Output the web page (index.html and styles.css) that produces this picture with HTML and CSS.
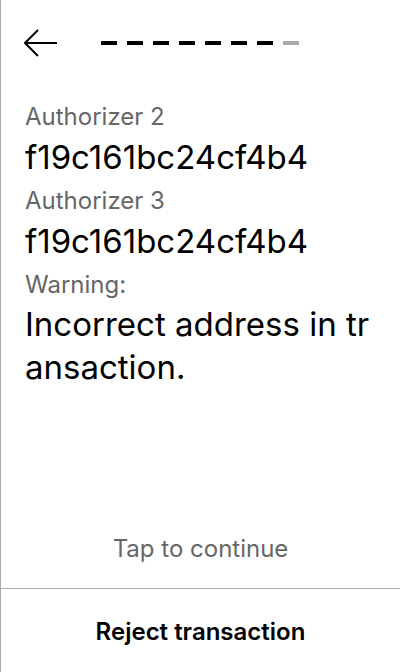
FILE: index.html
```html
<!DOCTYPE html>
<html>
<head>
<meta charset="utf-8">
<link rel="stylesheet" href="styles.css">
</head>
<body>
<div class="screen">
  <div class="header">
    <svg class="back" width="34" height="28" viewBox="0 0 34 28">
      <path d="M14 1 L1 14 L14 27 M1 14 H33" fill="none" stroke="#000" stroke-width="2"/>
    </svg>
    <div class="progress">
      <span class="dash"></span><span class="dash"></span><span class="dash"></span><span class="dash"></span><span class="dash"></span><span class="dash"></span><span class="dash"></span><span class="dash dim"></span>
    </div>
  </div>
  <div class="content">
    <div class="label">Authorizer 2</div>
    <div class="value">f19c161bc24cf4b4</div>
    <div class="label">Authorizer 3</div>
    <div class="value">f19c161bc24cf4b4</div>
    <div class="label">Warning:</div>
    <div class="warn">Incorrect address in transaction.</div>
  </div>
  <div class="tap">Tap to continue</div>
  <div class="reject">Reject transaction</div>
</div>
</body>
</html>
```

FILE: styles.css
```css
html, body {
  margin: 0;
  padding: 0;
  background: #fff;
}
.screen {
  width: 400px;
  height: 672px;
  box-sizing: border-box;
  border-left: 1px solid #aaaaaa;
  display: flex;
  flex-direction: column;
  font-family: Inter, "Noto Sans", sans-serif;
  color: #000;
}
.header {
  display: flex;
  align-items: center;
  height: 28px;
  padding: 29px 0 0 23px;
}
.back {
  display: block;
}
.progress {
  display: flex;
  gap: 10px;
  margin-left: 43px;
}
.dash {
  width: 16px;
  height: 4px;
  background: #000;
}
.dash.dim {
  background: #aaaaaa;
}
.content {
  padding: 46px 24px 0 24px;
  flex: 1;
  display: flex;
  flex-direction: column;
}
.label {
  font-size: 24px;
  line-height: 28px;
  color: #666;
  margin-bottom: 6px;
}
.value {
  font-size: 33px;
  line-height: 40px;
  margin-bottom: 10px;
}
.warn {
  margin-top: -2px;
  font-size: 33px;
  line-height: 43px;
  word-break: break-all;
}
.tap {
  text-align: center;
  font-size: 24px;
  line-height: 28px;
  color: #666;
  padding-bottom: 25px;
}
.reject {
  border-top: 1px solid #aaaaaa;
  height: 81px;
  padding-top: 2px;
  display: flex;
  align-items: center;
  justify-content: center;
  font-size: 24px;
  font-weight: 600;
}
```
